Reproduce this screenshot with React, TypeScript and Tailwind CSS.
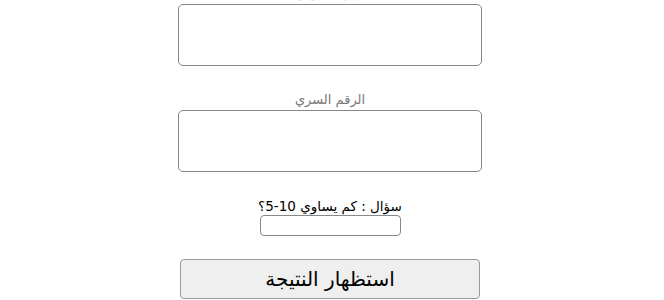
export default function App() {
  return (
    <div dir="rtl" className="w-full h-[300px] overflow-hidden bg-white font-['DejaVu_Sans',sans-serif]">
      <form className="flex flex-col items-center -mt-[16px] pr-[4px]">
        {/* label of the first field, scrolled out of view */}
        <label className="text-[13px] leading-[18px] text-[#777]">رقم الجلوس</label>
        <textarea className="mt-[2px] w-[304px] h-[62px] rounded-[5px] border border-[#888] bg-white resize-none" />

        <label className="mt-[25px] text-[13px] leading-[18px] text-[#777]">الرقم السري</label>
        <textarea className="mt-[1px] w-[304px] h-[62px] rounded-[5px] border border-[#888] bg-white resize-none" />

        <label className="mt-[25px] text-[13.5px] leading-[18px] text-black">سؤال : كم يساوي 10-5؟</label>
        <input
          type="text"
          className="w-[141px] h-[21px] rounded-[4px] border border-[#888] bg-white"
        />

        <button
          type="button"
          className="mt-[23px] w-[300px] h-[40px] rounded-[4px] border border-[#999] bg-[#efefef] text-[20px] text-black"
        >
          استظهار النتيجة
        </button>
      </form>
    </div>
  );
}
